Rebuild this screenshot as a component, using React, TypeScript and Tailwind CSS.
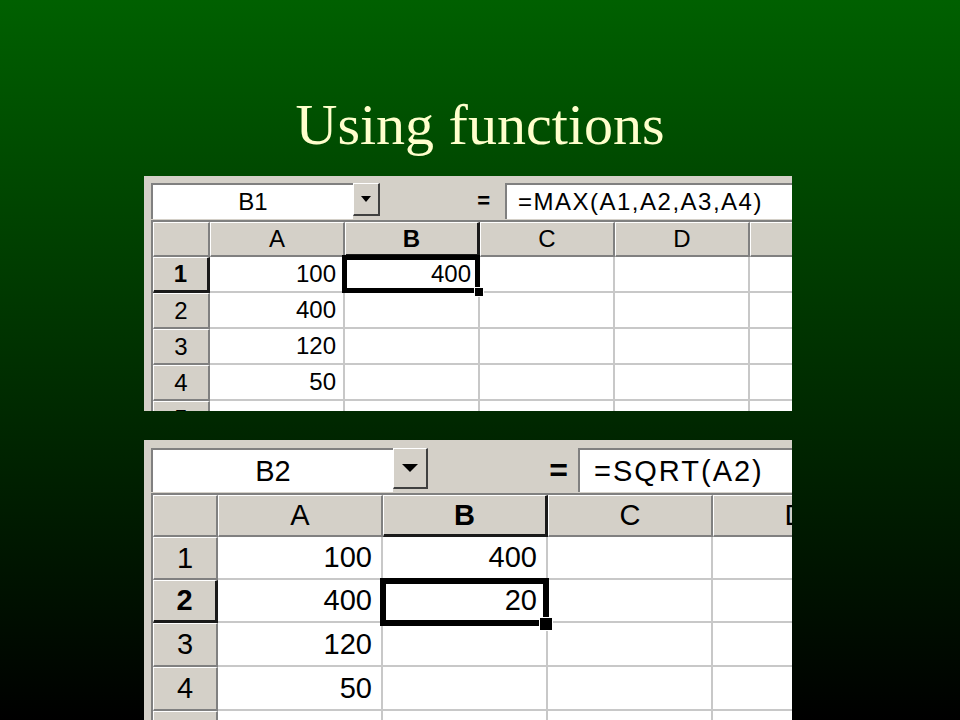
import React from "react";

type Cfg = {
  outer: string;
  bar: string;
  name: string;
  drop: string;
  tri: string;
  eq: string;
  formula: string;
  gap: string;
  rowHead: string;
  col: string;
  headH: string;
  rowH: string[];
  text: string;
  pad: string;
  sel: string;
  handle: string;
};

const topCfg: Cfg = {
  outer: "w-[648px] h-[235px] pl-[7px] pt-[7px]",
  bar: "h-[36px]",
  name: "w-[202px] text-[24px]",
  drop: "w-[27px] h-[33px]",
  tri: "border-l-[5px] border-r-[5px] border-t-[6px]",
  eq: "w-[125px] pr-[15px] text-[22px] font-black",
  formula: "pl-[11px] text-[24px] tracking-[1.5px]",
  gap: "mt-[1px]",
  rowHead: "w-[57px]",
  col: "w-[135px]",
  headH: "h-[35px]",
  rowH: ["h-[36px]", "h-[36px]", "h-[36px]", "h-[36px]", "h-[36px]"],
  text: "text-[24px]",
  pad: "pr-[7px]",
  sel: "-left-[3px] -top-[2px] -right-[2px] -bottom-[2px] border-[5px]",
  handle: "w-[10px] h-[10px] -right-[6px] -bottom-[6px]",
};

const bottomCfg: Cfg = {
  outer: "w-[648px] h-[280px] pl-[7px] pt-[8px]",
  bar: "h-[44px]",
  name: "w-[242px] text-[29px]",
  drop: "w-[35px] h-[41px]",
  tri: "border-l-[8px] border-r-[8px] border-t-[8px]",
  eq: "w-[150px] pr-[10px] text-[32px] font-black",
  formula: "pl-[14px] text-[29px] tracking-[2px]",
  gap: "mt-[1px]",
  rowHead: "w-[65px]",
  col: "w-[165px]",
  headH: "h-[42px]",
  rowH: ["h-[43px]", "h-[43px]", "h-[44px]", "h-[44px]", "h-[44px]"],
  text: "text-[29px]",
  pad: "pr-[9px]",
  sel: "-left-[3px] -top-[2px] -right-[3px] -bottom-[5px] border-[6px]",
  handle: "w-[14px] h-[14px] -right-[7px] -bottom-[10px]",
};

const hdr =
  "bg-[#d4d0c8] border-t border-l border-t-white border-l-white border-r-2 border-b-2 border-r-[#808080] border-b-[#808080]";
const hdrSel =
  "bg-[#d4d0c8] font-bold border-t border-l border-t-white border-l-white border-r-[3px] border-b-[3px] border-r-[#1a1a1a] border-b-[#1a1a1a]";

type SheetProps = {
  cfg: Cfg;
  name: string;
  formula: string;
  cols: string[];
  data: string[][];
  selCol: number;
  selRow: number;
};

function Sheet({ cfg, name, formula, cols, data, selCol, selRow }: SheetProps) {
  return (
    <div
      className={`${cfg.outer} ${cfg.text} bg-[#d4d0c8] overflow-hidden font-['Liberation_Sans',Arial,sans-serif] text-black leading-none`}
    >
      <div className={`flex ${cfg.bar}`}>
        <div
          className={`${cfg.name} h-full shrink-0 bg-white border-t-2 border-l-2 border-[#808080] flex items-center justify-center`}
        >
          {name}
        </div>
        <div
          className={`${cfg.drop} shrink-0 bg-[#d4d0c8] border-t border-l border-t-white border-l-white border-r-2 border-b-2 border-r-[#404040] border-b-[#404040] flex items-center justify-center`}
        >
          <div
            className={`w-0 h-0 ${cfg.tri} border-l-transparent border-r-transparent border-t-black`}
          />
        </div>
        <div
          className={`${cfg.eq} h-full shrink-0 flex items-center justify-end`}
        >
          =
        </div>
        <div
          className={`flex-1 h-full bg-white border-t-2 border-l-2 border-[#808080] flex items-center whitespace-nowrap ${cfg.formula}`}
        >
          {formula}
        </div>
      </div>
      <div
        className={`${cfg.gap} border-t-2 border-l-2 border-[#808080] flex flex-col`}
      >
        <div className={`flex ${cfg.headH}`}>
          <div className={`${cfg.rowHead} shrink-0 ${hdr}`} />
          {cols.map((c, i) => (
            <div
              key={c}
              className={`${cfg.col} shrink-0 ${
                i === selCol ? hdrSel : hdr
              } flex items-center justify-center`}
            >
              {c}
            </div>
          ))}
        </div>
        {cfg.rowH.map((h, r) => (
          <div key={r} className={`flex ${h} shrink-0`}>
            <div
              className={`${cfg.rowHead} shrink-0 ${
                r === selRow ? hdrSel : hdr
              } flex items-center justify-center`}
            >
              {r + 1}
            </div>
            {cols.map((c, i) => {
              const isSel = i === selCol && r === selRow;
              return (
                <div
                  key={c}
                  className={`${cfg.col} shrink-0 relative bg-white border-r-2 border-b-2 border-[#c8c8c8] flex items-center justify-end ${cfg.pad}`}
                >
                  {data[i]?.[r] ?? ""}
                  {isSel && (
                    <>
                      <div
                        className={`absolute ${cfg.sel} border-black z-10`}
                      />
                      <div
                        className={`absolute ${cfg.handle} bg-black border border-white z-20`}
                      />
                    </>
                  )}
                </div>
              );
            })}
          </div>
        ))}
      </div>
    </div>
  );
}

export default function App() {
  return (
    <div className="w-[960px] h-[720px] overflow-hidden bg-linear-to-b/srgb from-[#006000] to-[#000000] flex flex-col">
      <h1 className="mt-[96px] h-[58px] shrink-0 text-center text-[58px] leading-[58px] text-[#ffffcc] font-['Liberation_Serif','Times_New_Roman',serif]">
        Using functions
      </h1>
      <div className="mt-[22px] ml-[144px] shrink-0">
        <Sheet
          cfg={topCfg}
          name="B1"
          formula="=MAX(A1,A2,A3,A4)"
          cols={["A", "B", "C", "D", "E"]}
          data={[["100", "400", "120", "50"], ["400"]]}
          selCol={1}
          selRow={0}
        />
      </div>
      <div className="mt-[29px] ml-[144px] shrink-0">
        <Sheet
          cfg={bottomCfg}
          name="B2"
          formula="=SQRT(A2)"
          cols={["A", "B", "C", "D"]}
          data={[["100", "400", "120", "50"], ["400", "20"]]}
          selCol={1}
          selRow={1}
        />
      </div>
    </div>
  );
}
